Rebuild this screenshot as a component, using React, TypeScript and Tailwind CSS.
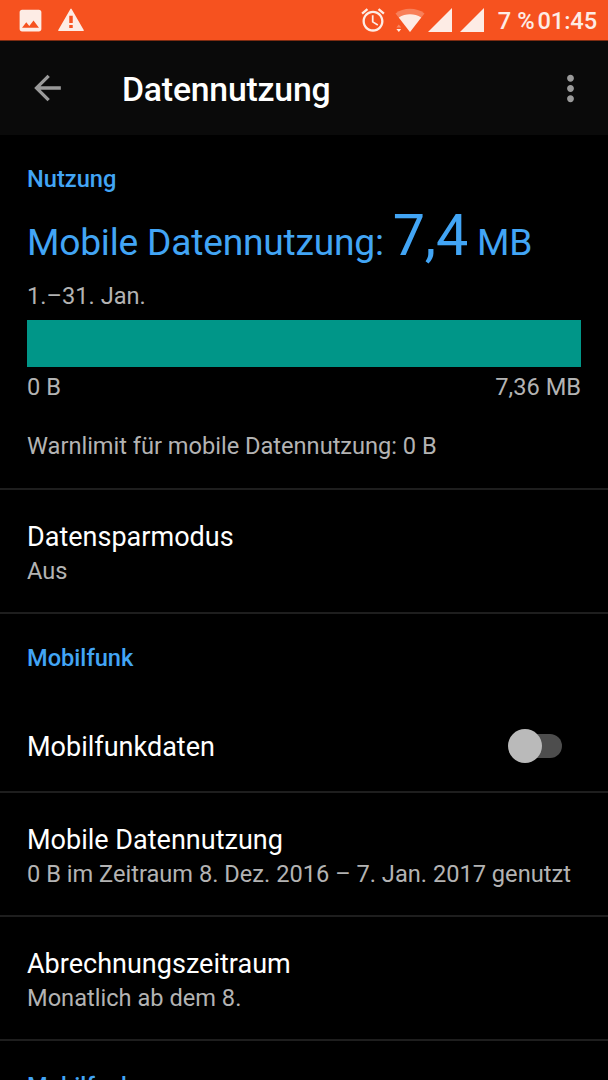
import { useState } from "react";

import clsx from "clsx";

function StatusBar() {
  return (
    <div className="flex h-[41px] items-start border-b border-[#7e2c12] bg-[#f6521f] text-[#fdece5]">
      <svg viewBox="0 0 24 24" className="ml-[16px] mt-[6px] h-[29px] w-[29px] fill-current">
        <path d="M21 19V5c0-1.100-.9-2-2-2H5c-1.100 0-2 .9-2 2v14c0 1.100.9 2 2 2h14c1.100 0 2-.9 2-2zM8.500 13.500l2.500 3.010L14.500 12l4.500 6H5l3.500-4.500z" />
      </svg>
      <svg viewBox="0 0 24 24" className="ml-[12px] mt-[6px] h-[28px] w-[28px] fill-current">
        <path d="M1.600 21.400h20.800q1 0 .5-.9L12.500 2.500q-.5-.8-1 0L1.100 20.500q-.5.9.5.900zM13.500 18.900h-3v-2.600h3v2.600zm0-4.300h-3V8.400h3v6.200z" />
      </svg>

      <svg viewBox="0 0 24 24" className="ml-auto mt-[6px] h-[28px] w-[28px] fill-current">
        <path d="M22 5.720l-4.600-3.860-1.290 1.530 4.600 3.860L22 5.720zM7.880 3.390L6.600 1.860 2 5.710l1.290 1.530 4.590-3.850zM12.500 8H11v6l4.750 2.850.75-1.230-4-2.370V8zM12 4c-4.970 0-9 4.030-9 9s4.020 9 9 9c4.970 0 9-4.030 9-9s-4.030-9-9-9zm0 16c-3.870 0-7-3.130-7-7s3.130-7 7-7 7 3.130 7 7-3.130 7-7 7z" />
      </svg>

      {/* Wi-Fi with activity arrows */}
      <svg viewBox="0 0 30 24" className="ml-[8px] mt-[8px] h-[24px] w-[30px] fill-current">
        <path d="M15 24L0.500 5.500C4.500 2.300 9.500 0.800 15 0.800s10.500 1.500 14.500 4.700z" opacity="0.3" />
        <path d="M15 24L3.800 9.600C7.300 7.200 11 6.300 15 6.300s7.700.9 11.200 3.300z" />
        <path d="M-1 15.500h7.900v9H-1z" className="fill-[#f6521f]" />
        <path d="M1.400 19.400h4.800L3.800 16.500z" opacity="0.35" />
        <path d="M1.400 21h4.800l-2.400 2.900z" />
      </svg>
      <svg viewBox="0 0 24 24" className="ml-[3px] mt-[8px] h-[24px] w-[24px] fill-current">
        <path d="M0 24h24V0z" />
      </svg>
      <svg viewBox="0 0 24 24" className="ml-[8px] mt-[8px] h-[24px] w-[24px] fill-current">
        <path d="M0 24h24V0z" />
      </svg>

      <span className="ml-[14px] mt-[7px] whitespace-nowrap text-[23.640px] leading-[28px] font-medium">
        7 %
      </span>
      <span className="ml-[3px] mr-[11px] mt-[7px] text-[23.640px] leading-[28px] font-medium tracking-[-0.100px]">
        01:45
      </span>
    </div>
  );
}

function AppBar() {
  return (
    <header className="flex h-[94px] items-center bg-[#0a0a0a]">
      <button aria-label="Zurück" className="ml-[27px] text-[#9a9a9a]">
        <svg viewBox="0 0 24 24" className="h-[40px] w-[41px] fill-current">
          <path d="M20 11H7.830l5.590-5.590L12 4l-8 8 8 8 1.410-1.410L7.830 13H20v-2z" />
        </svg>
      </button>
      <h1 className="ml-[54px] mt-[3px] text-[33.780px] leading-[40px] font-medium tracking-[-0.200px] text-white">
        Datennutzung
      </h1>
      <button aria-label="Mehr" className="ml-auto mr-[17px] text-[#9a9a9a]">
        <svg viewBox="0 0 24 24" className="h-[41px] w-[41px] fill-current">
          <path d="M12 8c1.100 0 2-.9 2-2s-.9-2-2-2-2 .9-2 2 .9 2 2 2zm0 2c-1.100 0-2 .9-2 2s.9 2 2 2 2-.9 2-2-.9-2-2-2zm0 6c-1.100 0-2 .9-2 2s.9 2 2 2 2-.9 2-2-.9-2-2-2z" />
        </svg>
      </button>
    </header>
  );
}

function SectionTitle({ children }: { children: string }) {
  return (
    <h2 className="text-[23.640px] leading-[28px] font-medium text-[#42a5f5]">{children}</h2>
  );
}

function Row({ title, summary }: { title: string; summary: string }) {
  return (
    <div className="h-[124px] border-b-[2px] border-[#1e1e1e] px-[27px] pt-[29px]">
      <p className="text-[27.020px] leading-[36px] text-white">{title}</p>
      <p className="whitespace-nowrap text-[23.640px] leading-[32px] text-[#b3b3b3]">{summary}</p>
    </div>
  );
}

export default function App() {
  const [mobileData, setMobileData] = useState(false);

  return (
    <div className="h-[1080px] w-[608px] overflow-hidden bg-black font-['Roboto',sans-serif]">
      <StatusBar />
      <AppBar />

      {/* Usage summary */}
      <section className="h-[355px] border-b-[2px] border-[#1e1e1e] px-[27px] pt-[30px] text-[23.640px] leading-[28px] text-[#b3b3b3]">
        <SectionTitle>Nutzung</SectionTitle>
        <p className="mt-[9px] h-[75px] whitespace-nowrap text-[37.160px] leading-[68px] tracking-[-0.210px] text-[#42a5f5]">
          Mobile Datennutzung: <span className="text-[57.430px]">7,4</span> MB
        </p>
        <p className="mt-[5px]">1.–31. Jan.</p>
        <div className="mt-[10px] h-[47px] bg-[#009688]" />
        <div className="mt-[6px] flex justify-between">
          <span>0 B</span>
          <span>7,36 MB</span>
        </div>
        <p className="mt-[31px] tracking-[-0.020px]">Warnlimit für mobile Datennutzung: 0 B</p>
      </section>

      <Row title="Datensparmodus" summary="Aus" />

      <div className="px-[27px] pt-[30px]">
        <SectionTitle>Mobilfunk</SectionTitle>
      </div>
      <div className="flex h-[121px] items-center justify-between border-b-[2px] border-[#1e1e1e] pl-[27px] pr-[46px] pt-[29px]">
        <span className="mt-[2px] text-[27.020px] leading-[36px] text-white">Mobilfunkdaten</span>
        <button
          role="switch"
          aria-label="Mobilfunkdaten"
          aria-checked={mobileData}
          onClick={() => setMobileData(!mobileData)}
          className="flex h-[24px] w-[48px] items-center rounded-full bg-[#4d4d4d]"
        >
          <span
            className={clsx(
              "h-[34px] w-[34px] shrink-0 rounded-full",
              mobileData ? "ml-[20px] bg-[#42a5f5]" : "-ml-[6px] bg-[#bababa]",
            )}
          />
        </button>
      </div>

      <Row title="Mobile Datennutzung" summary="0 B im Zeitraum 8. Dez. 2016 – 7. Jan. 2017 genutzt" />
      <Row title="Abrechnungszeitraum" summary="Monatlich ab dem 8." />

      <div className="px-[27px] pt-[31px]">
        <SectionTitle>Mobilfunk</SectionTitle>
      </div>
    </div>
  );
}
